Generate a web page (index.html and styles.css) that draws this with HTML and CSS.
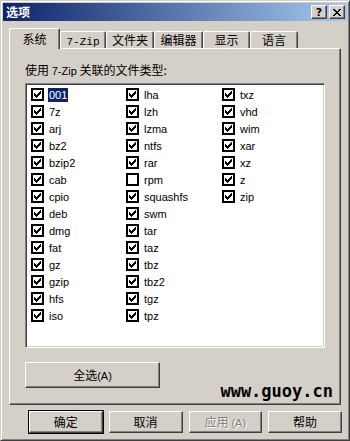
FILE: index.html
```html
<!DOCTYPE html>
<html>
  <head>
    <meta charset="utf-8">
    <title>选项</title>
    <link rel="stylesheet" href="styles.css">
  </head>
  <body>
    <svg class="defs" width="0" height="0">
      <symbol id="tick" viewBox="0 0 7 7">
        <path d="M6 0h1v1h-1z M5 1h2v1h-2z M0 2h1v1h-1z M4 2h3v1h-3z M0 3h2v1h-2z M3 3h3v1h-3z M0 4h5v1h-5z M1 5h3v1h-3z M2 6h1v1h-1z"/>
      </symbol>
    </svg>

    <div class="window">
      <div class="titlebar">
        <span class="title">选项</span>
        <div class="caption-btns">
          <span class="cap-btn">?</span>
          <span class="cap-btn close">
            <svg width="8" height="7" viewBox="0 0 8 7"><path d="M0 0h2v1h-2z M6 0h2v1h-2z M1 1h2v1h-2z M5 1h2v1h-2z M2 2h4v1h-4z M3 3h2v1h-2z M2 4h4v1h-4z M1 5h2v1h-2z M5 5h2v1h-2z M0 6h2v1h-2z M6 6h2v1h-2z"/></svg>
          </span>
        </div>
      </div>

      <div class="body">
        <div class="tabs">
          <span class="tab active">系统</span>
          <span class="tab w46"><span class="mono">7-Zip</span></span>
          <span class="tab w48">文件夹</span>
          <span class="tab w49">编辑器</span>
          <span class="tab w47">显示</span>
          <span class="tab w48">语言</span>
        </div>

        <div class="panel">
          <div class="label">使用 <span class="latin">7-Zip</span> 关联的文件类型:</div>

          <div class="listbox">
            <div class="items">
              <label class="item"><span class="chk"><svg><use href="#tick"/></svg></span><span class="name sel">001</span></label>
              <label class="item"><span class="chk"><svg><use href="#tick"/></svg></span><span class="name">7z</span></label>
              <label class="item"><span class="chk"><svg><use href="#tick"/></svg></span><span class="name">arj</span></label>
              <label class="item"><span class="chk"><svg><use href="#tick"/></svg></span><span class="name">bz2</span></label>
              <label class="item"><span class="chk"><svg><use href="#tick"/></svg></span><span class="name">bzip2</span></label>
              <label class="item"><span class="chk"><svg><use href="#tick"/></svg></span><span class="name">cab</span></label>
              <label class="item"><span class="chk"><svg><use href="#tick"/></svg></span><span class="name">cpio</span></label>
              <label class="item"><span class="chk"><svg><use href="#tick"/></svg></span><span class="name">deb</span></label>
              <label class="item"><span class="chk"><svg><use href="#tick"/></svg></span><span class="name">dmg</span></label>
              <label class="item"><span class="chk"><svg><use href="#tick"/></svg></span><span class="name">fat</span></label>
              <label class="item"><span class="chk"><svg><use href="#tick"/></svg></span><span class="name">gz</span></label>
              <label class="item"><span class="chk"><svg><use href="#tick"/></svg></span><span class="name">gzip</span></label>
              <label class="item"><span class="chk"><svg><use href="#tick"/></svg></span><span class="name">hfs</span></label>
              <label class="item"><span class="chk"><svg><use href="#tick"/></svg></span><span class="name">iso</span></label>

              <label class="item"><span class="chk"><svg><use href="#tick"/></svg></span><span class="name">lha</span></label>
              <label class="item"><span class="chk"><svg><use href="#tick"/></svg></span><span class="name">lzh</span></label>
              <label class="item"><span class="chk"><svg><use href="#tick"/></svg></span><span class="name">lzma</span></label>
              <label class="item"><span class="chk"><svg><use href="#tick"/></svg></span><span class="name">ntfs</span></label>
              <label class="item"><span class="chk"><svg><use href="#tick"/></svg></span><span class="name">rar</span></label>
              <label class="item"><span class="chk"></span><span class="name">rpm</span></label>
              <label class="item"><span class="chk"><svg><use href="#tick"/></svg></span><span class="name">squashfs</span></label>
              <label class="item"><span class="chk"><svg><use href="#tick"/></svg></span><span class="name">swm</span></label>
              <label class="item"><span class="chk"><svg><use href="#tick"/></svg></span><span class="name">tar</span></label>
              <label class="item"><span class="chk"><svg><use href="#tick"/></svg></span><span class="name">taz</span></label>
              <label class="item"><span class="chk"><svg><use href="#tick"/></svg></span><span class="name">tbz</span></label>
              <label class="item"><span class="chk"><svg><use href="#tick"/></svg></span><span class="name">tbz2</span></label>
              <label class="item"><span class="chk"><svg><use href="#tick"/></svg></span><span class="name">tgz</span></label>
              <label class="item"><span class="chk"><svg><use href="#tick"/></svg></span><span class="name">tpz</span></label>

              <label class="item"><span class="chk"><svg><use href="#tick"/></svg></span><span class="name">txz</span></label>
              <label class="item"><span class="chk"><svg><use href="#tick"/></svg></span><span class="name">vhd</span></label>
              <label class="item"><span class="chk"><svg><use href="#tick"/></svg></span><span class="name">wim</span></label>
              <label class="item"><span class="chk"><svg><use href="#tick"/></svg></span><span class="name">xar</span></label>
              <label class="item"><span class="chk"><svg><use href="#tick"/></svg></span><span class="name">xz</span></label>
              <label class="item"><span class="chk"><svg><use href="#tick"/></svg></span><span class="name">z</span></label>
              <label class="item"><span class="chk"><svg><use href="#tick"/></svg></span><span class="name">zip</span></label>
            </div>
          </div>

          <div class="panel-foot">
            <button class="btn select-all">全选<span class="latin">(A)</span></button>
            <span class="watermark">www.guoy.cn</span>
          </div>
        </div>

        <div class="actions">
          <button class="btn default">确定</button>
          <button class="btn">取消</button>
          <button class="btn disabled">应用 <span class="latin">(A)</span></button>
          <button class="btn">帮助</button>
        </div>
      </div>
    </div>
  </body>
</html>
```

FILE: styles.css
```css
body { margin: 0; background: #d4d0c8; font-family: "Noto Sans CJK SC", sans-serif; font-size: 12px; color: #000; }
.defs { position: absolute; }

.window { width: 350px; height: 441px; box-sizing: border-box; background: #d4d0c8; padding: 2px;
  border: 1px solid; border-color: #d4d0c8 #404040 #404040 #d4d0c8;
  box-shadow: inset 1px 1px 0 #fff, inset -1px -1px 0 #808080; }

.titlebar { height: 18px; display: flex; align-items: center; justify-content: space-between; padding: 0 2px 0 3px;
  background: linear-gradient(to right, #0a246a, #a6caf0); color: #fff; }
.title { font-weight: bold; font-size: 12px; line-height: 18px; }
.caption-btns { display: flex; gap: 2px; }
.cap-btn { width: 16px; height: 14px; box-sizing: border-box; background: #d4d0c8; color: #000; display: flex; align-items: center; justify-content: center;
  font-family: "DejaVu Sans", sans-serif; font-weight: bold; font-size: 11px; line-height: 1;
  border: 1px solid; border-color: #fff #404040 #404040 #fff; box-shadow: inset -1px -1px 0 #808080; }
.cap-btn svg { fill: #000; display: block; }

.body { padding: 7px 5px 0 6px; }

.tabs { display: flex; align-items: flex-end; height: 20px; position: relative; z-index: 1; }
.tab { height: 17px; box-sizing: border-box; text-align: center; line-height: 15px; background: #d4d0c8;
  border-top: 1px solid #fff; border-left: 1px solid #fff; border-right: 1px solid #404040;
  box-shadow: inset -1px 0 0 #808080; border-radius: 2px 2px 0 0; }
.tab.active { width: 51px; height: 21px; line-height: 19px; margin-bottom: -1px; }
.w46 { width: 46px; }
.w47 { width: 47px; }
.w48 { width: 48px; }
.w49 { width: 49px; }
.mono { font-family: "Liberation Mono", monospace; font-size: 11px; }
.latin { font-family: "Liberation Sans", sans-serif; font-size: 11px; }

.panel { width: 332px; height: 357px; box-sizing: border-box; padding: 13px 15px 3px 15px; display: flex; flex-direction: column;
  border: 1px solid; border-color: #fff #404040 #404040 #fff; box-shadow: inset -1px -1px 0 #808080; }
.label { line-height: 16px; height: 16px; margin-bottom: 5px; }

.listbox { width: 300px; height: 265px; box-sizing: border-box; background: #fff;
  border: 1px solid; border-color: #808080 #fff #fff #808080; box-shadow: inset 1px 1px 0 #404040, inset -1px -1px 0 #d4d0c8; padding: 2px 0 0 5px; }
.items { display: grid; grid-auto-flow: column; grid-template-rows: repeat(14, 17px); grid-template-columns: 95px 96px 70px; }
.item { display: flex; align-items: center; gap: 4px; font-family: "Liberation Sans", sans-serif; font-size: 11px; }
.chk { width: 9px; height: 9px; border: 2px solid #000; background: #fff; display: flex; align-items: center; justify-content: center; flex: none; }
.chk svg { width: 7px; height: 7px; fill: #000; display: block; }
.name { padding: 1px 1px; line-height: 12px; }
.name.sel { background: #0a246a; color: #fff; }

.btn { font-family: "Noto Sans CJK SC", sans-serif; font-size: 12px; color: #000; background: #d4d0c8; padding: 0; line-height: 1;
  border: 1px solid; border-color: #fff #404040 #404040 #fff; box-shadow: inset -1px -1px 0 #808080; }

.panel-foot { display: flex; justify-content: space-between; height: 38px; margin-top: 14px; margin-right: -8px; }
.select-all { width: 135px; height: 26px; }
.watermark { align-self: flex-end; font-family: "DejaVu Sans Mono", monospace; font-weight: bold; font-size: 17px; line-height: 17px; color: #000; }

.actions { display: flex; gap: 6px; padding: 6px 0 0 20px; }
.actions .btn { width: 75px; height: 22px; }
.btn.default { outline: 1px solid #000; outline-offset: 0; }
.btn.disabled { color: #808080; text-shadow: 1px 1px 0 #fff; }
```
